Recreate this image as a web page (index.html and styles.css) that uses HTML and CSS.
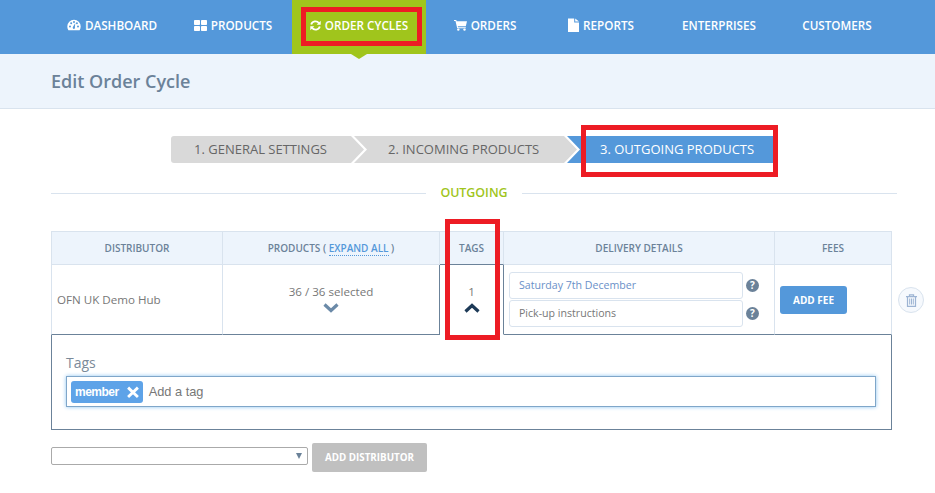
FILE: index.html
```html
<!DOCTYPE html>
<html>
<head>
    <link rel="stylesheet" href="styles.css">
</head>
<body>
    <nav class="topnav">
        <a class="nav-item nav-dashboard">
            <svg class="nav-icon" width="14" height="12" viewBox="0 0 14 12"><path fill="#fff" fill-rule="evenodd" d="M7 .8A6.7 6.7 0 0 0 .3 7.5c0 1.400.4 2.700 1.100 3.700h11.200c.7-1 1.100-2.300 1.100-3.700A6.700 6.700 0 0 0 7 .8zM3 8.400a1 1 0 1 1 0-2 1 1 0 0 1 0 2zm1.200-3.200a1 1 0 1 1 0-2 1 1 0 0 1 0 2zM7 3.900a1 1 0 1 1 0-2 1 1 0 0 1 0 2zm4 4.500a1 1 0 1 1 0-2 1 1 0 0 1 0 2zM9.900 5.200a1 1 0 1 1 0-2 1 1 0 0 1 0 2zM7 9.900A1.300 1.300 0 0 1 6.200 7.600L8.300 3.900l-.4 4.200A1.300 1.300 0 0 1 7 9.900z"/></svg>
            DASHBOARD
        </a>
        <a class="nav-item nav-products">
            <svg class="nav-icon" width="13" height="11" viewBox="0 0 13 11"><g fill="#fff"><rect width="6" height="5" rx=".8"/><rect x="7" width="6" height="5" rx=".8"/><rect y="6" width="6" height="5" rx=".8"/><rect x="7" y="6" width="6" height="5" rx=".8"/></g></svg>
            PRODUCTS
        </a>
        <a class="nav-item nav-cycles active">
            <svg class="nav-icon" width="11" height="11" viewBox="0 0 11 11"><g fill="none" stroke="#fff" stroke-width="1.800"><path d="M1.200 4.500A4.400 4.400 0 0 1 9 3.200"/><path d="M9.800 6.500A4.400 4.400 0 0 1 2 7.800"/></g><path fill="#fff" d="M10.700.8v4H6.700zM.3 10.200v-4h4z"/></svg>
            ORDER CYCLES
        </a>
        <a class="nav-item nav-orders">
            <svg class="nav-icon" width="13" height="12" viewBox="0 0 13 12"><path fill="#fff" d="M0 1h2.300l.3 1.200H13l-1.200 5H3.800l.2 1h7.800v1H3.200L1.500 2H0z"/><circle fill="#fff" cx="4.300" cy="10.600" r="1.200"/><circle fill="#fff" cx="10.500" cy="10.600" r="1.200"/></svg>
            ORDERS
        </a>
        <a class="nav-item nav-reports">
            <svg class="nav-icon" width="11" height="14" viewBox="0 0 11 14"><path fill="#fff" d="M0 .5h6.200V4.500H11V14H0zM7.200.5 11 3.500H7.200z"/></svg>
            REPORTS
        </a>
        <a class="nav-item nav-enterprises">ENTERPRISES</a>
        <a class="nav-item nav-customers">CUSTOMERS</a>
    </nav>

    <header class="subheader">
        <h1>Edit Order Cycle</h1>
    </header>

    <main class="content">
        <div class="steps">
            <div class="step step-one">1. GENERAL SETTINGS</div>
            <div class="step step-two">2. INCOMING PRODUCTS</div>
            <div class="step step-three">3. OUTGOING PRODUCTS</div>
        </div>

        <div class="divider"><span>OUTGOING</span></div>

        <table class="exchanges">
            <colgroup>
                <col class="col-distributor">
                <col class="col-products">
                <col class="col-tags">
                <col class="col-delivery">
                <col class="col-fees">
                <col class="col-delete">
            </colgroup>
            <thead>
                <tr>
                    <th>DISTRIBUTOR</th>
                    <th>PRODUCTS ( <a class="expand">EXPAND ALL</a> )</th>
                    <th class="tags-head">TAGS</th>
                    <th>DELIVERY DETAILS</th>
                    <th>FEES</th>
                    <th class="no-border"></th>
                </tr>
            </thead>
            <tbody>
                <tr>
                    <td class="name">OFN UK Demo Hub</td>
                    <td class="products">
                        36 / 36 selected
                        <svg class="chevron" width="16" height="10" viewBox="0 0 16 10"><path fill="none" stroke="#6b8aa8" stroke-width="3.200" d="M1.500 1.500 8 7.500l6.500-6"/></svg>
                    </td>
                    <td class="tags">
                        1
                        <svg class="chevron" width="16" height="10" viewBox="0 0 16 10"><path fill="none" stroke="#1d3a57" stroke-width="3.200" d="M1.500 8.500 8 2.500l6.500 6"/></svg>
                    </td>
                    <td class="delivery">
                        <div class="field-row">
                            <div class="field field-date">Saturday 7th December</div>
                            <span class="help">?</span>
                        </div>
                        <div class="field-row">
                            <div class="field">Pick-up instructions</div>
                            <span class="help">?</span>
                        </div>
                    </td>
                    <td class="fees"><button type="button" class="btn-fee">ADD FEE</button></td>
                    <td class="no-border remove">
                        <span class="trash">
                            <svg width="11" height="13" viewBox="0 0 11 13"><g fill="none" stroke="#9db4d3"><path stroke-width="1.300" d="M0 2.700h11M3.500 2.500V.8h4v1.700"/><path stroke-width="1.200" d="M1.500 2.700v9.700h8V2.700"/><path d="M3.700 4.500v6M5.500 4.500v6M7.300 4.500v6"/></g></svg>
                        </span>
                    </td>
                </tr>
                <tr>
                    <td colspan="5" class="tags-panel">
                        <label class="tags-label">Tags</label>
                        <div class="tags-input">
                            <span class="tag">member <svg width="12" height="12" viewBox="0 0 11 11"><path stroke="#fff" stroke-width="2.600" d="M1 1.500 10 10M10 1.500 1 10"/></svg></span>
                            <span class="placeholder">Add a tag</span>
                        </div>
                    </td>
                    <td class="no-border"></td>
                </tr>
            </tbody>
        </table>

        <div class="add-row">
            <div class="select-box"><span class="select-arrow"></span></div>
            <button type="button" class="btn-add">ADD DISTRIBUTOR</button>
        </div>
    </main>

    <!-- red boxes drawn on top of the screenshot -->
    <div class="mark mark-nav"></div>
    <div class="mark mark-step"></div>
    <div class="mark mark-tags"></div>
</body>
</html>
```

FILE: styles.css
```css
html, body {
    height: 493px;
    overflow: hidden;
}
body {
    position: relative;
    margin: 0;
    font-family: "Open Sans", sans-serif;
    font-size: 12px;
    color: #777;
    background-color: #fff;
}

/* top navigation */
.topnav {
    display: flex;
    height: 54px;
    padding-left: 50px;
    background-color: #5498da;
}
.nav-item {
    position: relative;
    display: flex;
    align-items: center;
    justify-content: center;
    gap: 4px;
    height: 50px;
    font-size: 11.7px;
    font-weight: 600;
    color: #fff;
}
.nav-item.active {
    height: 54px;
    padding-bottom: 4px;
    box-sizing: border-box;
    background-color: #a0c51c;
}
.nav-item.active::after {
    content: "";
    position: absolute;
    left: 50%;
    bottom: -5px;
    margin-left: -8px;
    border-left: 8px solid transparent;
    border-right: 8px solid transparent;
    border-top: 5px solid #a0c51c;
}
.nav-dashboard { width: 124px; }
.nav-products { width: 118px; }
.nav-cycles { width: 134px; }
.nav-orders { width: 118px; }
.nav-reports { width: 114px; }
.nav-enterprises { width: 122px; }
.nav-customers { width: 114px; }

/* page title */
.subheader {
    height: 54px;
    padding-left: 51px;
    display: flex;
    align-items: center;
    background-color: #edf4fc;
    border-bottom: 1px solid #d9e3ee;
}
.subheader h1 {
    margin: 0;
    font-size: 18px;
    font-weight: 600;
    color: #6b8299;
}

.content {
    padding: 27px 11px 0 51px;
}

/* wizard steps */
.steps {
    display: flex;
    margin-left: 120px;
}
.step {
    height: 27px;
    line-height: 27px;
    box-sizing: border-box;
    font-size: 13px;
    color: #666;
    background-color: #d9d9d9;
    margin-left: -10px;
    white-space: nowrap;
    clip-path: polygon(0 0, calc(100% - 13px) 0, 100% 50%, calc(100% - 13px) 100%, 0 100%, 13px 50%);
}
.step-one {
    width: 193px;
    margin-left: 0;
    padding-left: 23px;
    border-radius: 3px 0 0 3px;
    clip-path: polygon(0 0, calc(100% - 13px) 0, 100% 50%, calc(100% - 13px) 100%, 0 100%);
}
.step-two {
    width: 223px;
    padding-left: 34px;
}
.step-three {
    width: 206px;
    padding-left: 33px;
    color: #fff;
    background-color: #5498da;
    clip-path: polygon(0 0, 100% 0, 100% 100%, 0 100%, 13px 50%);
}

/* section title with a line on each side */
.divider {
    display: flex;
    align-items: center;
    width: 846px;
    gap: 14px;
    margin-top: 21px;
    font-size: 12.4px;
    font-weight: 600;
    line-height: 18px;
    color: #a0c51c;
}
.divider::before,
.divider::after {
    content: "";
    flex: 1;
    height: 1px;
    background-color: #d9e3ee;
}

/* exchanges table */
.exchanges {
    margin-top: 29px;
    table-layout: fixed;
    width: 873px;
    border-collapse: separate;
    border-spacing: 0;
}
.col-distributor { width: 172px; }
.col-products { width: 217px; }
.col-tags { width: 64px; }
.col-delivery { width: 271px; }
.col-fees { width: 117px; }
.col-delete { width: 32px; }
.exchanges th {
    height: 32px;
    padding: 0;
    font-size: 10px;
    font-weight: 600;
    color: #6b8299;
    background-color: #edf4fc;
    border-top: 1px solid #d9e3ee;
    border-right: 1px solid #d9e3ee;
    border-bottom: 1px solid #d9e3ee;
}
.exchanges th:first-child {
    border-left: 1px solid #d9e3ee;
}
.exchanges th.tags-head {
    border-bottom-color: #6b8299;
}
.exchanges th.no-border,
.exchanges td.no-border {
    border: none;
    background: none;
}
.expand {
    color: #5498da;
    border-bottom: 1px dotted #5498da;
}
.exchanges td {
    padding: 0;
    height: 69px;
    font-size: 11.6px;
    text-align: center;
    border-right: 1px solid #d9e3ee;
    border-bottom: 1px solid #6b8299;
    color: #777;
}
.exchanges td.name {
    text-align: left;
    padding-left: 5px;
    border-left: 1px solid #d9e3ee;
}
.exchanges td.products {
    border-right-color: #6b8299;
}
.exchanges td.products,
.exchanges td.tags {
    padding-bottom: 3px;
    box-sizing: border-box;
}
.exchanges td.tags {
    border-right-color: #6b8299;
    border-bottom-color: #fff;
}
.chevron {
    display: block;
    margin: 4px auto 0;
}

/* delivery details */
.exchanges td.delivery {
    padding-left: 5px;
}
.field-row {
    display: flex;
    align-items: center;
    gap: 3px;
    margin-bottom: 1px;
}
.field {
    width: 234px;
    height: 27px;
    line-height: 25px;
    box-sizing: border-box;
    padding-left: 9px;
    font-size: 10.6px;
    text-align: left;
    color: #777;
    border: 1px solid #d9e3ee;
    border-radius: 3px;
}
.field-date {
    color: #6a90c8;
}
.help {
    width: 13px;
    height: 13px;
    border-radius: 50%;
    background-color: #6b8299;
    color: #fff;
    font-size: 10px;
    font-weight: 700;
    line-height: 13px;
    text-align: center;
}

.exchanges td.fees {
    text-align: left;
    padding-left: 5px;
}
.btn-fee {
    width: 67px;
    height: 28px;
    padding: 0;
    border: none;
    border-radius: 3px;
    font-family: "Open Sans", sans-serif;
    font-size: 10px;
    font-weight: 700;
    color: #fff;
    background-color: #5498da;
}
.exchanges td.remove {
    text-align: right;
}
.trash {
    display: inline-flex;
    align-items: center;
    justify-content: center;
    width: 24px;
    height: 24px;
    border: 1px solid #d9e3ee;
    border-radius: 50%;
    background-color: #f6f9fd;
}

/* tags row */
.exchanges td.tags-panel {
    height: 95px;
    box-sizing: border-box;
    padding: 19px 15px 22px 14px;
    text-align: left;
    border-left: 1px solid #6b8299;
    border-right: 1px solid #6b8299;
}
.tags-label {
    display: block;
    font-size: 14px;
    line-height: 18px;
    color: #7b8a99;
}
.tags-input {
    display: flex;
    align-items: center;
    gap: 6px;
    height: 31px;
    margin-top: 4px;
    padding-left: 4px;
    box-sizing: border-box;
    border: 1px solid #7fa6c9;
    box-shadow: 0 0 4px #8cc4f0;
}
.tag {
    display: flex;
    align-items: center;
    gap: 8px;
    height: 22px;
    padding: 0 4px;
    border-radius: 3px;
    font-family: "Liberation Sans", sans-serif;
    font-size: 12px;
    font-weight: 700;
    letter-spacing: -0.5px;
    color: #fff;
    background-color: #5ea3e8;
}
.placeholder {
    font-family: "Liberation Sans", sans-serif;
    font-size: 12.8px;
    color: #777;
}

/* add distributor */
.add-row {
    display: flex;
    align-items: flex-start;
    gap: 4px;
    margin-top: 13px;
}
.select-box {
    position: relative;
    width: 257px;
    height: 18px;
    margin-top: 4px;
    box-sizing: border-box;
    border: 1px solid #aaa;
    border-radius: 2px;
}
.select-arrow {
    position: absolute;
    right: 5px;
    top: 5px;
    border-left: 3px solid transparent;
    border-right: 3px solid transparent;
    border-top: 6px solid #6b8299;
}
.btn-add {
    width: 115px;
    height: 29px;
    padding: 0;
    border: none;
    border-radius: 2px;
    font-family: "Open Sans", sans-serif;
    font-size: 9.8px;
    font-weight: 700;
    color: #fff;
    background-color: #c0c0c0;
}

/* red annotation boxes */
.mark {
    position: absolute;
    box-sizing: border-box;
    border: 5px solid #ed1c24;
}
.mark-nav {
    left: 301px;
    top: 7px;
    width: 121px;
    height: 39px;
}
.mark-step {
    left: 581px;
    top: 125px;
    width: 197px;
    height: 52px;
}
.mark-tags {
    left: 445px;
    top: 219px;
    width: 55px;
    height: 121px;
}
```
